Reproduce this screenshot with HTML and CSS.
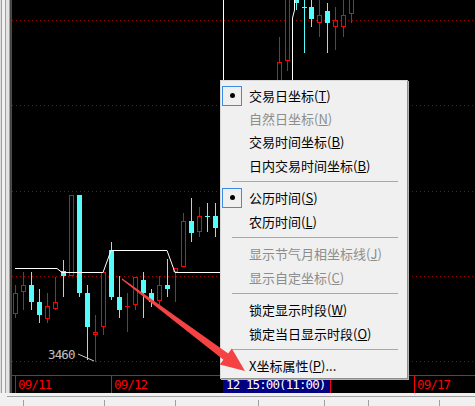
FILE: index.html
```html
<!DOCTYPE html>
<html lang="zh-CN">
<head>
    <meta charset="UTF-8">
    <title>K线 - X坐标菜单</title>
    <link rel="stylesheet" href="styles.css">
</head>
<body>
    <div class="window">
        <div class="main">
            <div class="frame"></div>
            <div class="chart">
                <svg id="plot" class="plot" viewBox="12 0 463 375" width="463" height="375"></svg>
                <div class="axis">
                    <div class="tick t1">09/11</div>
                    <div class="tick t2">09/12</div>
                    <div class="tick cursor">12 15:00(11:00)</div>
                    <div class="gap"></div>
                    <div class="tick t4">09/17</div>
                </div>
            </div>
        </div>
        <div class="status">
            <div class="status-row">
                <div class="cell c0"></div>
                <div class="cell c1"></div>
                <div class="cell c2"></div>
                <div class="cell c3"></div>
                <div class="cell c4"></div>
                <div class="cell c5"></div>
                <div class="cell c6"></div>
                <div class="cell c7"></div>
            </div>
        </div>

        <div class="menu">
            <div class="item checked"><span class="check"></span><span class="label">交易日坐标(<u>T</u>)</span></div>
            <div class="item disabled"><span class="check"></span><span class="label">自然日坐标(<u>N</u>)</span></div>
            <div class="item"><span class="check"></span><span class="label">交易时间坐标(<u>B</u>)</span></div>
            <div class="item"><span class="check"></span><span class="label">日内交易时间坐标(<u>B</u>)</span></div>
            <div class="sep"></div>
            <div class="item checked"><span class="check"></span><span class="label">公历时间(<u>S</u>)</span></div>
            <div class="item"><span class="check"></span><span class="label">农历时间(<u>L</u>)</span></div>
            <div class="sep"></div>
            <div class="item disabled"><span class="check"></span><span class="label">显示节气月相坐标线(<u>J</u>)</span></div>
            <div class="item disabled"><span class="check"></span><span class="label">显示自定坐标(<u>C</u>)</span></div>
            <div class="sep"></div>
            <div class="item"><span class="check"></span><span class="label">锁定显示时段(<u>W</u>)</span></div>
            <div class="item"><span class="check"></span><span class="label">锁定当日显示时段(<u>O</u>)</span></div>
            <div class="sep"></div>
            <div class="item"><span class="check"></span><span class="label">X坐标属性(<u>P</u>)...</span></div>
        </div>

        <svg class="pointer" width="475" height="406" viewBox="0 0 475 406">
            <polygon points="122.4,278.4 228.2,353.4 231.8,348.6 245,371 219.8,364.6 223.4,359.8 121.6,279.6"/>
        </svg>
    </div>

    <script>
        const NS = 'http://www.w3.org/2000/svg';
        const svg = document.getElementById('plot');

        function add(tag, attrs, text) {
            const el = document.createElementNS(NS, tag);
            for (const k in attrs) el.setAttribute(k, attrs[k]);
            if (text) el.textContent = text;
            svg.appendChild(el);
            return el;
        }

        // dotted price grid
        [20, 105, 191, 276, 361].forEach(y => {
            add('line', { x1: 12, x2: 475, y1: y + 0.5, y2: y + 0.5, class: 'grid' });
        });

        // [x, bodyTop, bodyBottom, high, low, 'r' hollow red | 'c' cyan]
        const candles = [
            [15, 293, 314, 285, 318, 'r'],
            [23, 285, 292, 272, 310, 'r'],
            [31, 285, 302, 272, 310, 'c'],
            [39, 302, 315, 289, 323, 'c'],
            [47, 306, 319, 293, 323, 'r'],
            [55, 302, 309, 277, 310, 'r'],
            [63, 271, 276, 260, 297, 'c'],
            [71, 195, 276, 195, 276, 'r'],
            [79, 195, 293, 195, 297, 'c'],
            [87, 293, 327, 285, 360, 'c'],
            [95, 332, 335, 315, 362, 'r'],
            [103, 272, 327, 272, 335, 'r'],
            [111, 250, 297, 242, 300, 'c'],
            [119, 297, 310, 276, 318, 'c'],
            [127, 306, 306, 293, 332, 'r'],
            [135, 277, 305, 277, 310, 'r'],
            [143, 280, 293, 272, 318, 'c'],
            [151, 293, 302, 289, 307, 'c'],
            [159, 285, 301, 276, 305, 'r'],
            [167, 285, 289, 259, 297, 'c'],
            [175, 268, 272, 268, 302, 'r'],
            [183, 221, 267, 213, 267, 'r'],
            [191, 221, 233, 198, 242, 'c'],
            [199, 216, 232, 207, 237, 'r'],
            [207, 216, 216, 203, 232, 'c'],
            [215, 216, 228, 203, 237, 'c'],
            [279, 62, 90, 37, 90, 'r'],
            [287, -2, 61, -2, 71, 'r'],
            [296, -2, 3, -2, 10, 'c'],
            [304, 7, 7, -2, 53, 'c'],
            [311, 7, 19, -2, 27, 'c'],
            [319, 15, 23, -2, 37, 'r'],
            [327, 11, 23, 3, 53, 'c'],
            [335, 20, 27, 7, 50, 'r'],
            [343, 15, 27, -2, 37, 'r'],
            [351, -2, 14, -2, 23, 'r']
        ];

        candles.forEach(([x, t, b, h, l, c]) => {
            add('line', { x1: x + 0.5, x2: x + 0.5, y1: h, y2: l, class: c === 'r' ? 'wick-r' : 'wick-c' });
            if (c === 'c') {
                add('rect', { x: x - 2, y: t, width: 5, height: Math.max(b - t, 1), class: 'body-c' });
            } else if (b === t) {
                add('line', { x1: x - 2, x2: x + 3, y1: t + 0.5, y2: t + 0.5, class: 'wick-r' });
            } else {
                add('rect', { x: x - 1.5, y: t + 0.5, width: 4, height: b - t - 1, class: 'body-r' });
            }
        });

        // white average line
        add('polyline', { points: '15,268.5 57,268.5 62,272.5 103,272.5 111,250.5 167,250.5 175,272.5 221,272.5', class: 'avg' });
        add('polyline', { points: '223.5,0 223.5,80', class: 'avg' });
        add('polyline', { points: '292.5,80 292.5,18 294.5,10 294.5,0', class: 'avg' });

        // low marker
        add('line', { x1: 78, y1: 354, x2: 94, y2: 361, class: 'leader' });
        add('text', { x: 48, y: 359, class: 'low' }, '3460');
    </script>
</body>
</html>
```

FILE: styles.css
```css
body {
    margin: 0;
    background-color: #f0f0f0;
    overflow: hidden;
}
.window {
    position: relative;
    width: 475px;
    height: 406px;
}
.main {
    display: flex;
    height: 393px;
}
.frame {
    flex: none;
    width: 11px;
    background: linear-gradient(to right,
        #dcdcdc 0 1px, #a0a0a0 1px 2px, #f0f0f0 2px 5px,
        #a0a0a0 5px 6px, #e3e3e3 6px 9px, #a0a0a0 9px 10px, #404040 10px 11px);
}
.chart {
    flex: 1;
    display: flex;
    flex-direction: column;
    background-color: #000;
    border-left: 1px solid #f00;
}
.plot {
    display: block;
    shape-rendering: crispEdges;
}
.grid {
    stroke: #a00000;
    stroke-dasharray: 1 3;
}
.wick-r {
    stroke: #ff0000;
}
.wick-c {
    stroke: #54fcfc;
}
.body-r {
    fill: #000;
    stroke: #ff0000;
}
.body-c {
    fill: #54fcfc;
}
.avg {
    fill: none;
    stroke: #fff;
    shape-rendering: auto;
}
.leader {
    stroke: #c8c8c8;
    shape-rendering: auto;
}
.low {
    fill: #c0c0c0;
    font-family: "DejaVu Sans Mono", monospace;
    font-size: 12.5px;
    letter-spacing: -0.9px;
}

.axis {
    display: flex;
    height: 17px;
    padding-left: 3px;
    border-top: 1px solid #f00;
    color: #f00;
    font-family: "DejaVu Sans Mono", monospace;
    font-size: 12.5px;
    letter-spacing: -0.9px;
    line-height: 17px;
}
.tick {
    flex: none;
    box-sizing: border-box;
    padding-left: 2px;
    border-left: 1px solid #f00;
    white-space: nowrap;
}
.t1 {
    width: 96px;
}
.t2 {
    width: 112px;
}
.cursor {
    width: 108px;
    padding-left: 3px;
    border-left: none;
    border-right: 1px solid #f00;
    background-color: #000080;
    color: #fff;
}
.gap {
    flex: none;
    width: 83px;
}
.t4 {
    flex: 1;
}

.status {
    height: 13px;
    box-sizing: border-box;
    padding: 3px 0 0 7px;
}
.status-row {
    display: flex;
    height: 10px;
    border-top: 1px solid #a0a0a0;
}
.cell {
    flex: none;
    margin-top: 3px;
    border-left: 1px solid #a0a0a0;
}
.c0 {
    width: 16px;
    border-left: none;
}
.c1 { width: 80px; }
.c2 { width: 70px; }
.c3 { width: 82px; }
.c4 { width: 65px; }
.c5 { width: 43px; }
.c6 { width: 70px; }
.c7 { flex: 1; }

.menu {
    position: absolute;
    left: 220px;
    top: 80px;
    width: 188px;
    box-sizing: border-box;
    padding: 3px 1px 1px;
    background-color: #f0f0f0;
    border: 1px solid #d8d8d8;
    border-right-color: #8e8e8e;
    border-bottom-color: #8e8e8e;
    box-shadow: 1px 1px 0 #b4b4b4;
}
.item {
    display: flex;
    align-items: center;
    height: 23.2px;
}
.check {
    flex: none;
    display: flex;
    align-items: center;
    justify-content: center;
    width: 20px;
    height: 20px;
    box-sizing: border-box;
    margin-right: 7px;
}
.checked .check {
    border: 1px solid #3a8ce6;
}
.checked .check::after {
    content: '';
    width: 5px;
    height: 5px;
    border-radius: 50%;
    background-color: #000;
}
.label {
    font-family: "Noto Sans CJK SC", sans-serif;
    font-size: 13px;
    line-height: 1;
    color: #000;
    white-space: nowrap;
}
.disabled .label {
    color: #8d8d8d;
}
.sep {
    display: flex;
    align-items: center;
    height: 9.6px;
    padding: 0 8px 0 10px;
}
.sep::before {
    content: '';
    flex: 1;
    border-top: 1px solid #a8a8a8;
}

.pointer {
    position: absolute;
    left: 0;
    top: 0;
    pointer-events: none;
}
.pointer polygon {
    fill: #f54343;
}
```
